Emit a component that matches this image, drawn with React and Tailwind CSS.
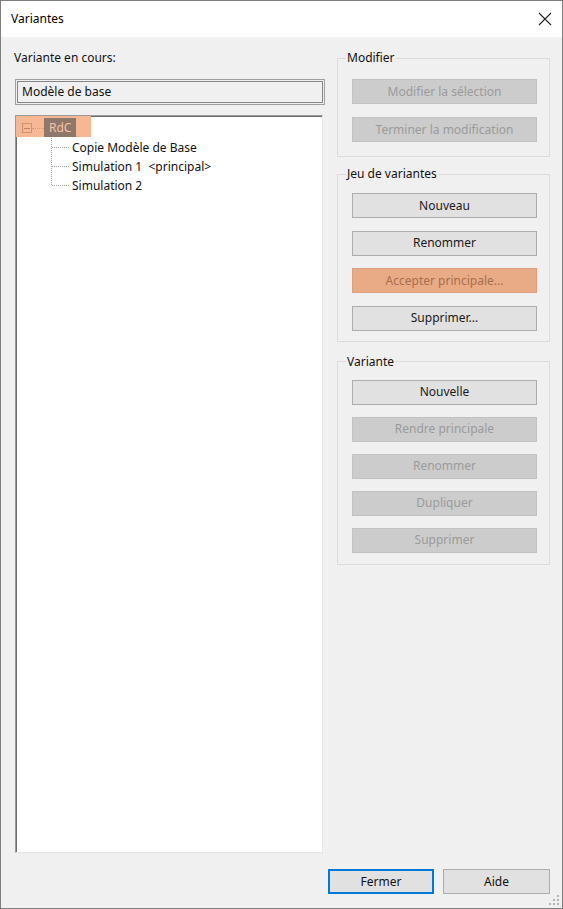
import React from "react";

const font = { fontFamily: '"Noto Sans", "Liberation Sans", sans-serif' };

const Btn = ({ label, kind = "normal" }) => {
  const styles = {
    normal: "bg-[#e1e1e1] border-[#adadad] text-[#1a1a1a]",
    disabled: "bg-[#cccccc] border-[#c2c2c2] text-[#9b9b9b]",
    accent: "bg-[#e8ab86] border-[#dca07c] text-[#a86f4c]",
  };
  return (
    <div
      className={`w-[185px] h-[25px] border flex items-center justify-center text-[12px] leading-[16px] ${styles[kind]}`}
    >
      {label}
    </div>
  );
};

const Group = ({ title, pt, pb, gap, items }) => (
  <fieldset className={`border border-[#dcdcdc] px-[8px] ${pt} ${pb}`}>
    <legend className="px-[1px] text-[12px] leading-[16px] text-[#111]">{title}</legend>
    <div className={`ml-[6px] flex flex-col ${gap}`}>
      {items.map(([label, kind]) => (
        <Btn key={label} label={label} kind={kind} />
      ))}
    </div>
  </fieldset>
);

const TreeLines = () => (
  <svg width="20" height="49" className="shrink-0">
    <g stroke="#a0a0a0" strokeWidth="1" strokeDasharray="1 1" fill="none">
      <line x1="0.5" y1="0" x2="0.5" y2="48" />
      <line x1="1" y1="9.5" x2="18" y2="9.5" />
      <line x1="1" y1="28.5" x2="18" y2="28.5" />
      <line x1="1" y1="47.5" x2="18" y2="47.5" />
    </g>
  </svg>
);

const Grip = () => (
  <svg width="10" height="10" className="absolute right-[3px] bottom-[3px]">
    <g fill="#b4b4b4">
      <rect x="8" y="0" width="2" height="2" />
      <rect x="4" y="4" width="2" height="2" />
      <rect x="8" y="4" width="2" height="2" />
      <rect x="0" y="8" width="2" height="2" />
      <rect x="4" y="8" width="2" height="2" />
      <rect x="8" y="8" width="2" height="2" />
    </g>
  </svg>
);

export default function App() {
  return (
    <div
      style={font}
      className="relative w-[563px] h-[909px] border border-[#7d7d7d] bg-[#f0f0f0] flex flex-col text-[12px] leading-[16px] text-[#111]"
    >
      {/* title bar */}
      <div className="h-[36px] shrink-0 bg-white flex items-center justify-between pl-[10px] pr-[10px]">
        <span className="text-[12px] text-black">Variantes</span>
        <svg width="14" height="14" viewBox="0 0 14 14">
          <path d="M1 1 L13 13 M13 1 L1 13" stroke="#222" strokeWidth="1.1" fill="none" />
        </svg>
      </div>

      {/* body */}
      <div className="flex-1 min-h-0 flex flex-col pt-[13px] pb-[14px]">
        <div className="flex-1 min-h-0 flex pl-[14px] pr-[11px] gap-[12px]">
          {/* left column */}
          <div className="w-[310px] flex flex-col">
            <div className="h-[16px] -ml-[1px]">Variante en cours:</div>
            <div className="mt-[13px] h-[26px] border border-[#a0a0a0] shadow-[inset_0_0_0_1px_#f0f0f0,inset_0_0_0_2px_#858585] flex items-center pl-[6px]">
              Modèle de base
            </div>
            <div className="mt-[10px] flex-1 min-h-0 w-[308px] bg-white border-t border-l border-[#9a9a9a] border-r border-b border-r-[#e6e6e6] border-b-[#e6e6e6] shadow-[inset_1px_1px_0_#6e6e6e]">
              <div className="inline-flex items-start h-[21px] w-[75px] bg-[#f5b892]">
                <div className="mt-[7px] ml-[6px] w-[10px] h-[10px] border border-[#c89579] flex items-center justify-center">
                  <div className="w-[6px] h-px bg-[#b98468]" />
                </div>
                <div className="mt-[12px] w-[12px] border-t border-dotted border-[#c99b80]" />
                <div className="mt-[2px] h-[19px] px-[5px] bg-[#8e786c] text-[#f6c4a3] flex items-center">
                  RdC
                </div>
              </div>
              <div className="flex ml-[35px] mt-[1px]">
                <TreeLines />
                <div className="flex flex-col pl-[1px]">
                  <div className="h-[19px] flex items-center">Copie Modèle de Base</div>
                  <div className="h-[19px] flex items-center whitespace-pre">Simulation 1  &lt;principal&gt;</div>
                  <div className="h-[19px] flex items-center">Simulation 2</div>
                </div>
              </div>
            </div>
          </div>

          {/* right column */}
          <div className="w-[213px] flex flex-col">
            <Group
              title="Modifier"
              pt="pt-[13px]"
              pb="pb-[14px]"
              gap="gap-[13px]"
              items={[
                ["Modifier la sélection", "disabled"],
                ["Terminer la modification", "disabled"],
              ]}
            />
            <div className="mt-[9px]">
              <Group
                title="Jeu de variantes"
                pt="pt-[11px]"
                pb="pb-[10px]"
                gap="gap-[12.5px]"
                items={[
                  ["Nouveau", "normal"],
                  ["Renommer", "normal"],
                  ["Accepter principale...", "accent"],
                  ["Supprimer...", "normal"],
                ]}
              />
            </div>
            <div className="mt-[12px]">
              <Group
                title="Variante"
                pt="pt-[10px]"
                pb="pb-[11px]"
                gap="gap-[12px]"
                items={[
                  ["Nouvelle", "normal"],
                  ["Rendre principale", "disabled"],
                  ["Renommer ", "disabled"],
                  ["Dupliquer", "disabled"],
                  ["Supprimer", "disabled"],
                ]}
              />
            </div>
          </div>
        </div>

        {/* footer */}
        <div className="mt-[16px] h-[25px] shrink-0 flex justify-end gap-[9px] pr-[12px]">
          <div className="w-[106px] h-[25px] border-2 border-[#0078d7] bg-[#e1e1e1] flex items-center justify-center">
            Fermer
          </div>
          <div className="w-[107px] h-[25px] border border-[#adadad] bg-[#e1e1e1] flex items-center justify-center">
            Aide
          </div>
        </div>
      </div>
      <Grip />
    </div>
  );
}
